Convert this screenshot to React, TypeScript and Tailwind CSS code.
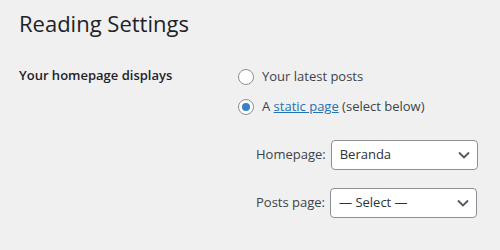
import React from "react"

function Radio({ checked }: { checked?: boolean }) {
  return (
    <span className="flex h-4 w-4 shrink-0 items-center justify-center rounded-full border border-[#8c8f94] bg-white">
      {checked && <span className="h-2 w-2 rounded-full bg-[#3582c4]" />}
    </span>
  )
}

function FakeSelect({ value }: { value: string }) {
  return (
    <div className="flex h-[30px] w-[147px] items-center justify-between rounded-[4px] border border-[#8c8f94] bg-white pl-2 pr-[7px] text-[#2c3338]">
      <span>{value}</span>
      <svg width="12" height="8" viewBox="0 0 12 8" fill="none">
        <path d="M1 1.5l5 5 5-5" stroke="#50575e" strokeWidth="1.8" />
      </svg>
    </div>
  )
}

export default function App() {
  return (
    <div className="min-h-screen bg-[#f0f0f1] pl-[19px] font-['Open_Sans',sans-serif] text-[13px] text-[#3c434a]">
      <h1 className="pt-[8px] text-[22px] leading-[30px] font-normal text-[#1d2327]">Reading Settings</h1>

      <div className="mt-[27px] flex">
        {/* label column */}
        <div className="w-[200px] shrink-0 pr-[10px] leading-[20px] font-semibold text-[#1d2327]">
          Your homepage displays
        </div>

        {/* options */}
        <div className="pl-[19px]">
          <div className="flex h-6 items-center gap-[8px]">
            <Radio />
            <span>Your latest posts</span>
          </div>
          <div className="mt-[6px] flex h-6 items-center gap-[8px]">
            <Radio checked />
            <span>
              A <span className="text-[#2271b1] underline">static page</span> (select below)
            </span>
          </div>

          <div className="mt-[21px] ml-[18px] flex flex-col gap-[18px]">
            <div className="flex items-center gap-[5px]">
              <span>Homepage:</span>
              <FakeSelect value="Beranda" />
            </div>
            <div className="flex items-center gap-[5px]">
              <span>Posts page:</span>
              <FakeSelect value="— Select —" />
            </div>
          </div>
        </div>
      </div>
    </div>
  )
}
